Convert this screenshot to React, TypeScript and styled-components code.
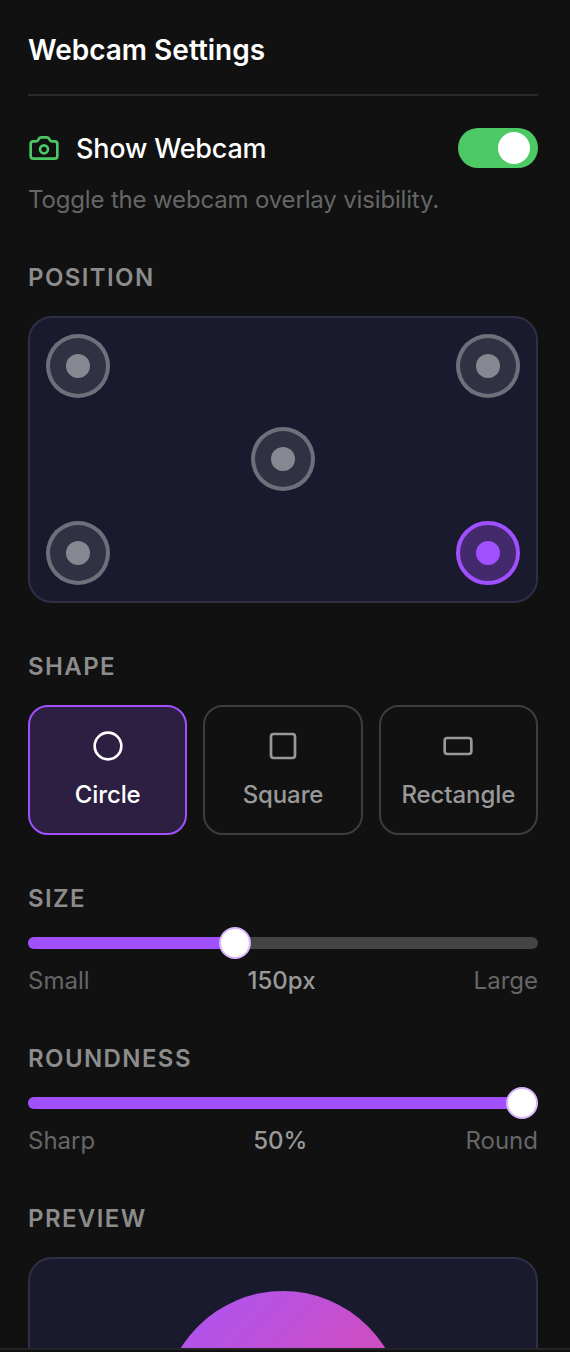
import { useState } from "react";
import styled, { createGlobalStyle } from "styled-components";
import { Camera, Circle, RectangleHorizontal, Square } from "lucide-react";

const Global = createGlobalStyle`
  html, body {
    margin: 0;
    background: #111111;
  }
  * {
    box-sizing: border-box;
  }
`;

const Page = styled.div`
  width: 570px;
  height: 1352px;
  overflow: hidden;
  display: flex;
  flex-direction: column;
  background: #111111;
  font-family: Inter, "Liberation Sans", sans-serif;
`;

const Panel = styled.div`
  height: 1348px;
  flex: none;
  overflow: hidden;
  padding: 32px 32px 0 28px;
`;

const BottomEdge = styled.div`
  flex: 1;
  border-top: 2px solid #242424;
`;

const Title = styled.h1`
  margin: 0;
  height: 64px;
  padding-bottom: 20px;
  border-bottom: 2px solid #2a2a2a;
  font-size: 28px;
  line-height: 36px;
  font-weight: 600;
  color: #ffffff;
`;

const ToggleRow = styled.div`
  display: flex;
  align-items: center;
  justify-content: space-between;
  margin-top: 32px;
  height: 40px;
`;

const ToggleLabel = styled.div`
  display: flex;
  align-items: center;
  gap: 16px;
  font-size: 27px;
  font-weight: 500;
  letter-spacing: -0.2px;
  color: #ffffff;
  svg {
    color: #4cc864;
  }
`;

const Toggle = styled.button<{ $on: boolean }>`
  width: 80px;
  height: 40px;
  padding: 4px 8px 4px 4px;
  border: 0;
  border-radius: 20px;
  display: flex;
  justify-content: ${(p) => (p.$on ? "flex-end" : "flex-start")};
  background: ${(p) => (p.$on ? "#4cc864" : "#444444")};
  cursor: pointer;
`;

const ToggleThumb = styled.span`
  width: 32px;
  height: 32px;
  border-radius: 50%;
  background: #ffffff;
`;

const Hint = styled.p`
  margin: 16px 0 0;
  font-size: 24px;
  line-height: 32px;
  letter-spacing: -0.16px;
  color: #666666;
`;

const Section = styled.section<{ $top: number }>`
  margin-top: ${(p) => p.$top}px;
`;

const SectionLabel = styled.h2`
  margin: 0;
  font-size: 24px;
  line-height: 32px;
  font-weight: 600;
  letter-spacing: 1.4px;
  color: #8c8c8c;
`;

const PositionPad = styled.div`
  margin-top: 22px;
  aspect-ratio: 16 / 9;
  padding: 16px;
  display: grid;
  grid-template-columns: 1fr auto 1fr;
  grid-template-rows: 1fr auto 1fr;
  background: #1a1a2e;
  border: 2px solid #2f2f45;
  border-radius: 24px;
`;

const Marker = styled.button<{ $active?: boolean; $col: number; $row: number }>`
  grid-column: ${(p) => p.$col};
  grid-row: ${(p) => p.$row};
  justify-self: ${(p) => (p.$col === 1 ? "start" : p.$col === 3 ? "end" : "center")};
  align-self: ${(p) => (p.$row === 1 ? "start" : p.$row === 3 ? "end" : "center")};
  width: 64px;
  height: 64px;
  padding: 0;
  border-radius: 50%;
  display: flex;
  align-items: center;
  justify-content: center;
  border: 4px solid ${(p) => (p.$active ? "#a050ff" : "rgba(255, 255, 255, 0.3)")};
  background: ${(p) => (p.$active ? "rgba(160, 80, 255, 0.3)" : "rgba(255, 255, 255, 0.1)")};
  cursor: pointer;
`;

const MarkerDot = styled.span<{ $active?: boolean }>`
  width: 24px;
  height: 24px;
  border-radius: 50%;
  background: ${(p) => (p.$active ? "#a050ff" : "rgba(255, 255, 255, 0.42)")};
`;

const ShapeRow = styled.div`
  margin-top: 22px;
  display: grid;
  grid-template-columns: repeat(3, 1fr);
  gap: 16px;
`;

const ShapeButton = styled.button<{ $active?: boolean }>`
  height: 130px;
  padding: 23px 0 0;
  display: flex;
  flex-direction: column;
  align-items: center;
  gap: 17px;
  border-radius: 20px;
  border: 2px solid ${(p) => (p.$active ? "#a050ff" : "#3d3d3d")};
  background: ${(p) => (p.$active ? "#2d1f42" : "transparent")};
  color: ${(p) => (p.$active ? "#ffffff" : "#999999")};
  font-family: inherit;
  font-size: 24px;
  line-height: 32px;
  font-weight: 500;
  letter-spacing: -0.1px;
  cursor: pointer;
`;

const Track = styled.div`
  position: relative;
  margin-top: 22px;
  height: 12px;
  border-radius: 6px;
  background: #444444;
`;

const TrackFill = styled.div`
  height: 100%;
  border-radius: 6px;
  background: #a050ff;
`;

const SliderThumb = styled.div`
  position: absolute;
  top: -10px;
  width: 32px;
  height: 32px;
  border-radius: 50%;
  background: #ffffff;
  border: 2px solid #d8b4fe;
`;

const ScaleRow = styled.div`
  margin-top: 16px;
  display: flex;
  justify-content: space-between;
  font-size: 24px;
  line-height: 32px;
  color: #666666;
`;

const ScaleValue = styled.span`
  font-weight: 500;
  color: #999999;
`;

const PreviewBox = styled.div`
  margin-top: 22px;
  height: 320px;
  padding-top: 32px;
  display: flex;
  justify-content: center;
  background: #1a1a2e;
  border: 2px solid #2f2f45;
  border-radius: 24px;
`;

const PreviewShape = styled.div`
  width: 240px;
  height: 240px;
  border-radius: 50%;
  background: linear-gradient(135deg, #a855f7, #ec4899);
`;

const positions = [
  { col: 1, row: 1 },
  { col: 3, row: 1 },
  { col: 2, row: 2 },
  { col: 1, row: 3 },
  { col: 3, row: 3, active: true },
];

const shapes = [
  { label: "Circle", Icon: Circle, active: true },
  { label: "Square", Icon: Square },
  { label: "Rectangle", Icon: RectangleHorizontal },
];

function Slider({ percent, thumbLeft }: { percent: number; thumbLeft: number }) {
  return (
    <Track>
      <TrackFill style={{ width: `${percent}%` }} />
      <SliderThumb style={{ left: `${thumbLeft}px` }} />
    </Track>
  );
}

export default function App() {
  const [visible, setVisible] = useState(true);

  return (
    <Page>
      <Global />
      <Panel>
        <Title>Webcam Settings</Title>
        <ToggleRow>
          <ToggleLabel>
            <Camera size={32} strokeWidth={2} />
            Show Webcam
          </ToggleLabel>
          <Toggle $on={visible} onClick={() => setVisible(!visible)}>
            <ToggleThumb />
          </Toggle>
        </ToggleRow>
        <Hint>Toggle the webcam overlay visibility.</Hint>

        <Section $top={46}>
          <SectionLabel>POSITION</SectionLabel>
          <PositionPad>
            {positions.map((p) => (
              <Marker key={`${p.col}-${p.row}`} $col={p.col} $row={p.row} $active={p.active}>
                <MarkerDot $active={p.active} />
              </Marker>
            ))}
          </PositionPad>
        </Section>

        <Section $top={48}>
          <SectionLabel>SHAPE</SectionLabel>
          <ShapeRow>
            {shapes.map(({ label, Icon, active }) => (
              <ShapeButton key={label} $active={active}>
                <Icon size={32} />
                {label}
              </ShapeButton>
            ))}
          </ShapeRow>
        </Section>

        <Section $top={48}>
          <SectionLabel>SIZE</SectionLabel>
          <Slider percent={40} thumbLeft={191} />
          <ScaleRow>
            <span>Small</span>
            <ScaleValue>150px</ScaleValue>
            <span>Large</span>
          </ScaleRow>
        </Section>

        <Section $top={46}>
          <SectionLabel>ROUNDNESS</SectionLabel>
          <Slider percent={100} thumbLeft={478} />
          <ScaleRow>
            <span>Sharp</span>
            <ScaleValue>50%</ScaleValue>
            <span>Round</span>
          </ScaleRow>
        </Section>

        <Section $top={46}>
          <SectionLabel>PREVIEW</SectionLabel>
          <PreviewBox>
            <PreviewShape />
          </PreviewBox>
        </Section>
      </Panel>
      <BottomEdge />
    </Page>
  );
}
